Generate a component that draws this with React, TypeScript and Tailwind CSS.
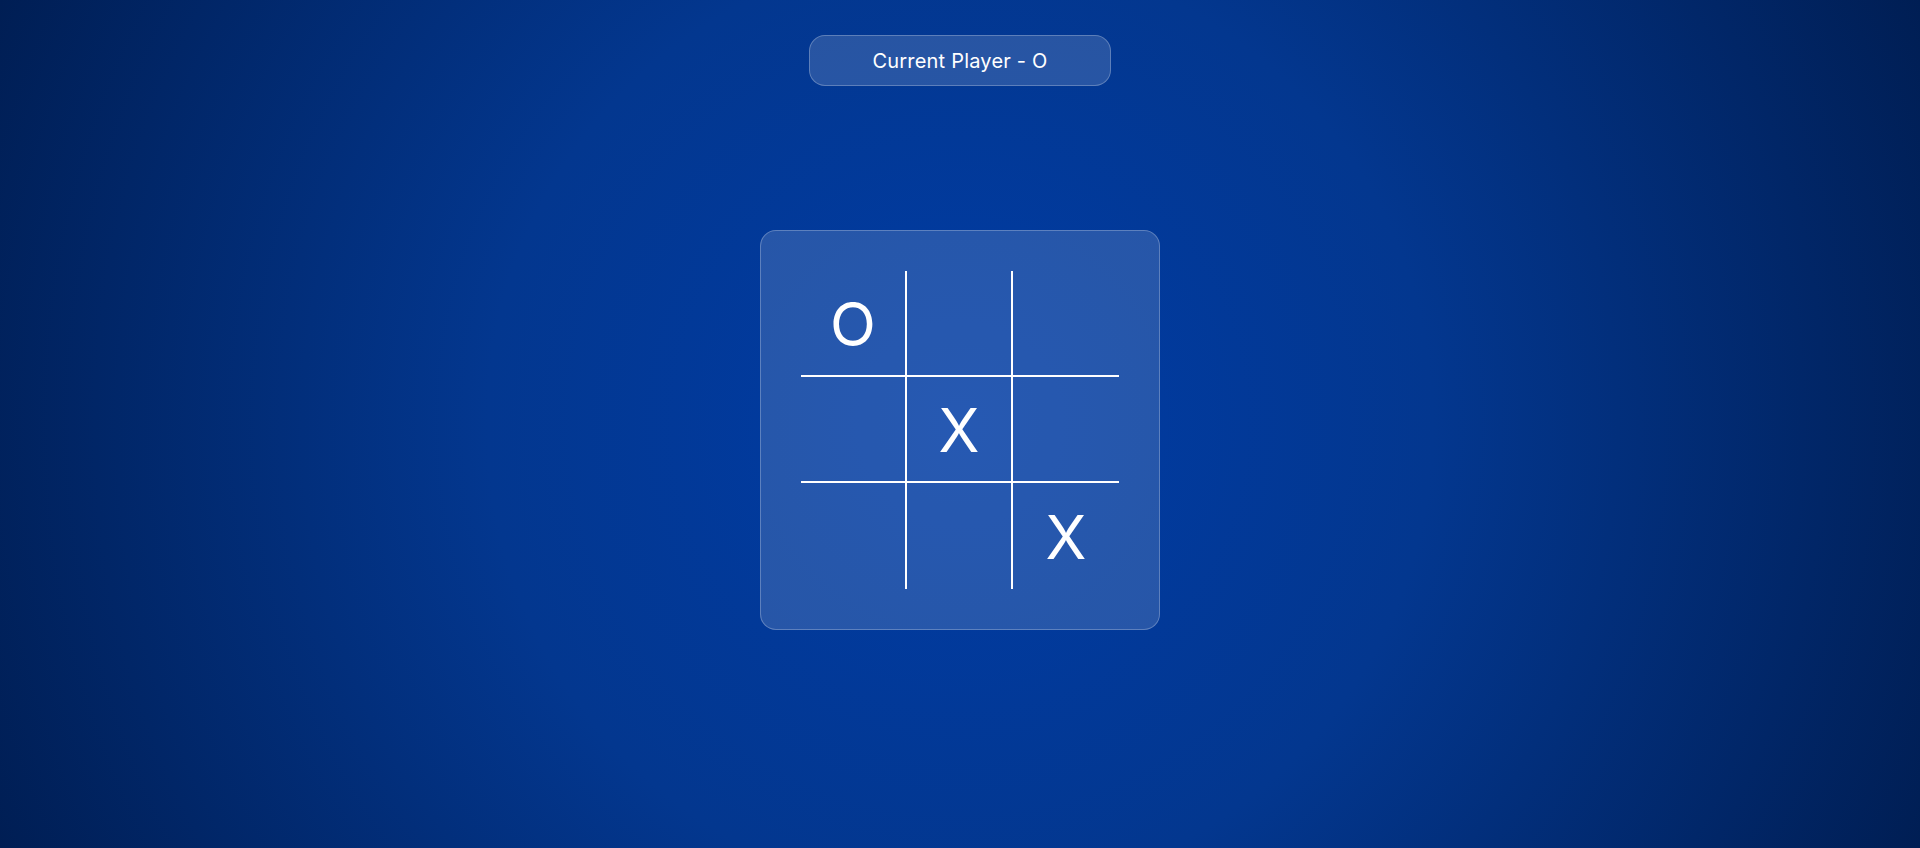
import React from 'react';

const BOARD = ['O', '', '', '', 'X', '', '', '', 'X'];

// each cell draws its own inner grid lines
const CELL_BORDERS = [
  'border-r-2 border-b-2',
  'border-r-2 border-b-2',
  'border-b-2',
  'border-r-2 border-b-2',
  'border-r-2 border-b-2',
  'border-b-2',
  'border-r-2',
  'border-r-2',
  '',
];

const App: React.FC = () => {
  return (
    <div
      className="min-h-screen w-full flex flex-col items-center bg-[radial-gradient(circle_at_center,#003ca6_0%,#03378f_45%,#001e54_100%)] text-white"
      style={{ fontFamily: 'Inter, "Noto Sans", sans-serif' }}
    >
      <div className="mt-[35px] w-[302px] h-[51px] flex items-center justify-center rounded-2xl bg-white/15 border border-white/25 text-[20px] tracking-[0.2px]">
        Current Player - O
      </div>

      <div className="mt-[144px] w-[400px] h-[400px] p-10 rounded-2xl bg-white/15 border border-white/25">
        <div className="grid grid-cols-3 grid-rows-3 w-full h-full">
          {BOARD.map((v, i) => (
            <div
              key={i}
              className={`flex items-center justify-center border-white text-[60px] leading-none pt-[2px] ${CELL_BORDERS[i]}`}
            >
              {v}
            </div>
          ))}
        </div>
      </div>
    </div>
  );
};

export default App;
